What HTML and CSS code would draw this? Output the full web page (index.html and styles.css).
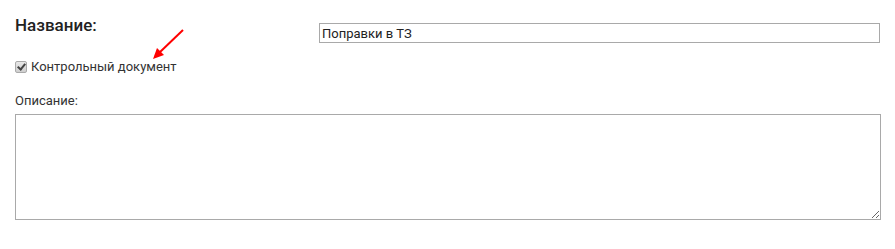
FILE: index.html
```html
<!DOCTYPE html>
<html>
<head>
  <title>Документ</title>
  <link rel="stylesheet" href="styles.css">
</head>
<body>
  <div class="form">
    <div class="row-title">
      <label class="title-label" for="nameInput">Название:</label>
      <input type="text" id="nameInput" class="name-input" value="Поправки в ТЗ" />
    </div>

    <div class="row-check">
      <input type="checkbox" id="controlCheck" class="check" checked />
      <label for="controlCheck">Контрольный документ</label>
      <!-- red pointer arrow -->
      <svg class="arrow" width="40" height="36" viewBox="0 0 40 36">
        <line x1="36" y1="2" x2="12" y2="25" stroke="#f00" stroke-width="2" />
        <polygon points="6,31 10,20 17,27" fill="#f00" />
      </svg>
    </div>

    <div class="row-desc">
      <label for="descInput">Описание:</label>
      <textarea id="descInput" class="desc-input"></textarea>
    </div>
  </div>
</body>
</html>
```

FILE: styles.css
```css
body {
  margin: 0;
  padding: 0;
  background-color: white;
  font-family: Roboto, "Noto Sans", sans-serif;
  color: #333;
}

.form {
  padding: 15px 15px 0 15px;
}

.row-title {
  display: flex;
  align-items: flex-start;
}

.title-label {
  width: 304px;
  font-size: 17px;
  font-weight: 500;
  line-height: 20px;
  color: #222;
}

.name-input {
  flex: 1;
  margin: 8px 0 0 0;
  height: 20px;
  box-sizing: border-box;
  border: 1px solid #a9a9a9;
  padding: 0 2px;
  font-family: Roboto, sans-serif;
  font-size: 13px;
  color: #222;
}

.row-check {
  position: relative;
  display: flex;
  align-items: center;
  margin-top: 15px;
  font-size: 13px;
  line-height: 18px;
}

/* old-style grey checkbox */
.check {
  appearance: none;
  -webkit-appearance: none;
  margin: 0 4px 0 0;
  width: 12px;
  height: 12px;
  box-sizing: border-box;
  border: 1px solid #aaa;
  border-radius: 2px;
  background: linear-gradient(#e8e8e8, #cfcfcf);
  position: relative;
}

.check:checked::after {
  content: "";
  position: absolute;
  left: 3px;
  top: 0px;
  width: 3px;
  height: 6px;
  border: solid #444;
  border-width: 0 2px 2px 0;
  transform: rotate(40deg);
}

.arrow {
  position: absolute;
  left: 132px;
  top: -30px;
}

.row-desc {
  margin-top: 17px;
  font-size: 13px;
}

.row-desc label {
  display: block;
  margin-bottom: 6px;
}

.desc-input {
  display: block;
  width: 866px;
  height: 106px;
  box-sizing: border-box;
  border: 1px solid #a9a9a9;
  margin: 0;
}
```
